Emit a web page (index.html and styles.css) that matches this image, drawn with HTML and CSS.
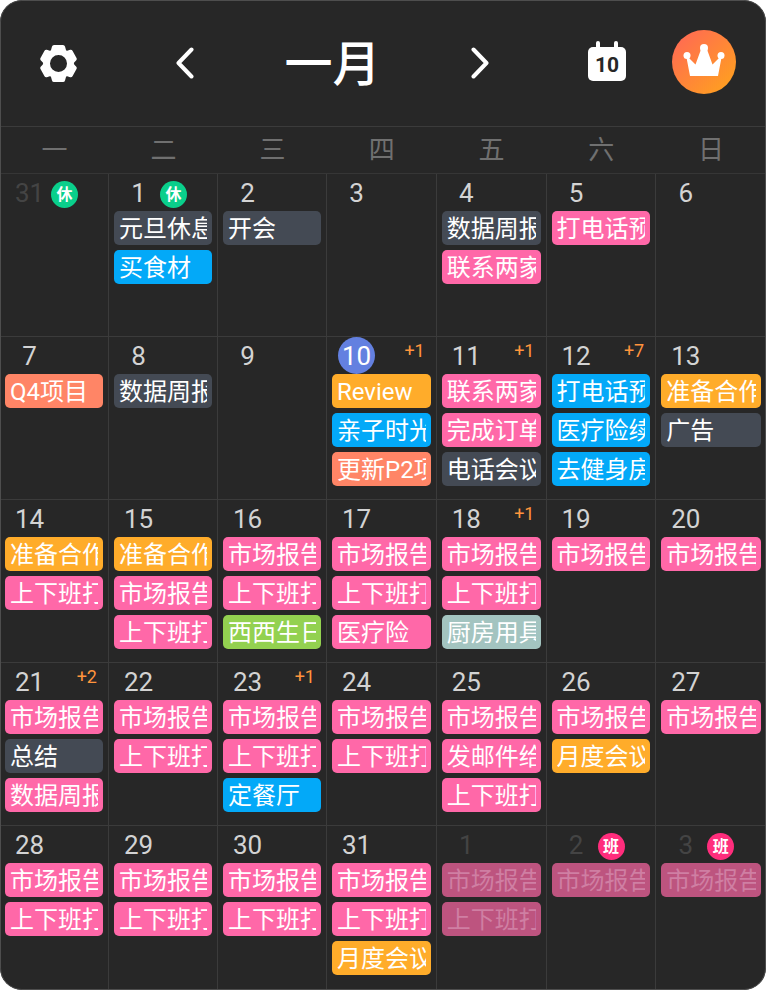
FILE: index.html
```html
<!DOCTYPE html>
<html lang="zh-CN">
<head>
<meta charset="utf-8">
<meta name="viewport" content="width=device-width, initial-scale=1">
<title>一月</title>
<link rel="stylesheet" href="styles.css">
</head>
<body>
<main class="card">
  <header class="bar">
    <button class="icon-btn" type="button" aria-label="设置">
      <svg width="37" height="37" viewBox="0 0 37 37"><path fill="#fff" fill-rule="evenodd" d="M14 0h9q1.600 0 2 1.500l1 3.500q.3 1 1.200.7l3-.9q1.500-.4 2.300 1l4 7.200q.7 1.300-.4 2.400l-1.700 1.900q-1 1.200 0 2.400l1.700 1.900q1.100 1.100.4 2.400l-4 7.200q-.8 1.400-2.300 1l-3-.9q-.9-.3-1.200.7l-1 3.500q-.4 1.500-2 1.500h-9q-1.600 0-2-1.500l-1-3.500q-.3-1-1.200-.7l-3 .9q-1.500.4-2.300-1l-4-7.200q-.7-1.300.4-2.400l1.700-1.900q1-1.200 0-2.400l-1.700-1.900q-1.100-1.100-.4-2.400l4-7.200q.8-1.400 2.300-1l3 .9q.9.3 1.200-.7l1-3.500q.4-1.500 2-1.500zM18.500 10a8.500 8.500 0 1 0 0 17a8.500 8.500 0 1 0 0-17z"/></svg>
    </button>
    <nav class="months" aria-label="月份">
      <button class="icon-btn" type="button" aria-label="上个月">
        <svg width="19" height="32" viewBox="0 0 19 32"><path d="M16.500 2.500L3.500 16l13 13.500" fill="none" stroke="#fff" stroke-width="4" stroke-linecap="round" stroke-linejoin="round"/></svg>
      </button>
      <h1 class="title">一月</h1>
      <button class="icon-btn" type="button" aria-label="下个月">
        <svg width="19" height="32" viewBox="0 0 19 32"><path d="M2.500 2.500l13 13.500l-13 13.500" fill="none" stroke="#fff" stroke-width="4" stroke-linecap="round" stroke-linejoin="round"/></svg>
      </button>
    </nav>
    <div class="tools">
      <button class="today-btn" type="button" aria-label="今天 10">10</button>
      <button class="vip-btn" type="button" aria-label="会员">
        <svg width="42" height="34" viewBox="0 0 42 34"><g fill="#fff"><path d="M3 12l4 21h28L39 12l-9.500 9.500L23.500 5h-5L12.500 21.500z"/><circle cx="21" cy="5" r="4"/><circle cx="4" cy="12.500" r="3.500"/><circle cx="38" cy="12.500" r="3.500"/></g></svg>
      </button>
    </div>
  </header>

  <table class="month">
    <colgroup>
      <col class="narrow" span="3">
      <col span="4">
    </colgroup>
    <thead>
      <tr><th>一</th><th>二</th><th>三</th><th>四</th><th>五</th><th>六</th><th>日</th></tr>
    </thead>
    <tbody>
      <tr>
        <td class="other"><div class="head"><span class="num">31</span><span class="tag rest">休</span></div></td>
        <td><div class="head"><span class="num">1</span><span class="tag rest">休</span></div><div class="ev slate">元旦休息</div><div class="ev blue">买食材</div></td>
        <td><div class="head"><span class="num">2</span></div><div class="ev slate">开会</div></td>
        <td><div class="head"><span class="num">3</span></div></td>
        <td><div class="head"><span class="num">4</span></div><div class="ev slate">数据周报</div><div class="ev pink">联系两家</div></td>
        <td><div class="head"><span class="num">5</span></div><div class="ev pink">打电话预</div></td>
        <td><div class="head"><span class="num">6</span></div></td>
      </tr>
      <tr>
        <td><div class="head"><span class="num">7</span></div><div class="ev coral">Q4项目</div></td>
        <td><div class="head"><span class="num">8</span></div><div class="ev slate">数据周报</div></td>
        <td><div class="head"><span class="num">9</span></div></td>
        <td><div class="head"><span class="num now">10</span><span class="more">+1</span></div><div class="ev amber">Review</div><div class="ev blue">亲子时光</div><div class="ev coral">更新P2项</div></td>
        <td><div class="head"><span class="num">11</span><span class="more">+1</span></div><div class="ev pink">联系两家</div><div class="ev pink">完成订单</div><div class="ev slate">电话会议</div></td>
        <td><div class="head"><span class="num">12</span><span class="more">+7</span></div><div class="ev blue">打电话预</div><div class="ev blue">医疗险续</div><div class="ev blue">去健身房</div></td>
        <td><div class="head"><span class="num">13</span></div><div class="ev amber">准备合作</div><div class="ev slate">广告</div></td>
      </tr>
      <tr>
        <td><div class="head"><span class="num">14</span></div><div class="ev amber">准备合作</div><div class="ev pink">上下班打</div></td>
        <td><div class="head"><span class="num">15</span></div><div class="ev amber">准备合作</div><div class="ev pink">市场报告</div><div class="ev pink">上下班打</div></td>
        <td><div class="head"><span class="num">16</span></div><div class="ev pink">市场报告</div><div class="ev pink">上下班打</div><div class="ev green">西西生日</div></td>
        <td><div class="head"><span class="num">17</span></div><div class="ev pink">市场报告</div><div class="ev pink">上下班打</div><div class="ev pink">医疗险</div></td>
        <td><div class="head"><span class="num">18</span><span class="more">+1</span></div><div class="ev pink">市场报告</div><div class="ev pink">上下班打</div><div class="ev sage">厨房用具</div></td>
        <td><div class="head"><span class="num">19</span></div><div class="ev pink">市场报告</div></td>
        <td><div class="head"><span class="num">20</span></div><div class="ev pink">市场报告</div></td>
      </tr>
      <tr>
        <td><div class="head"><span class="num">21</span><span class="more">+2</span></div><div class="ev pink">市场报告</div><div class="ev slate">总结</div><div class="ev pink">数据周报</div></td>
        <td><div class="head"><span class="num">22</span></div><div class="ev pink">市场报告</div><div class="ev pink">上下班打</div></td>
        <td><div class="head"><span class="num">23</span><span class="more">+1</span></div><div class="ev pink">市场报告</div><div class="ev pink">上下班打</div><div class="ev blue">定餐厅</div></td>
        <td><div class="head"><span class="num">24</span></div><div class="ev pink">市场报告</div><div class="ev pink">上下班打</div></td>
        <td><div class="head"><span class="num">25</span></div><div class="ev pink">市场报告</div><div class="ev pink">发邮件给</div><div class="ev pink">上下班打</div></td>
        <td><div class="head"><span class="num">26</span></div><div class="ev pink">市场报告</div><div class="ev amber">月度会议</div></td>
        <td><div class="head"><span class="num">27</span></div><div class="ev pink">市场报告</div></td>
      </tr>
      <tr>
        <td><div class="head"><span class="num">28</span></div><div class="ev pink">市场报告</div><div class="ev pink">上下班打</div></td>
        <td><div class="head"><span class="num">29</span></div><div class="ev pink">市场报告</div><div class="ev pink">上下班打</div></td>
        <td><div class="head"><span class="num">30</span></div><div class="ev pink">市场报告</div><div class="ev pink">上下班打</div></td>
        <td><div class="head"><span class="num">31</span></div><div class="ev pink">市场报告</div><div class="ev pink">上下班打</div><div class="ev amber">月度会议</div></td>
        <td class="other"><div class="head"><span class="num">1</span></div><div class="ev pink">市场报告</div><div class="ev pink">上下班打</div></td>
        <td class="other"><div class="head"><span class="num">2</span><span class="tag work">班</span></div><div class="ev pink">市场报告</div></td>
        <td class="other"><div class="head"><span class="num">3</span><span class="tag work">班</span></div><div class="ev pink">市场报告</div></td>
      </tr>
    </tbody>
  </table>
</main>
</body>
</html>
```
FILE: styles.css
```css
* {
  box-sizing: border-box;
}

body {
  margin: 0;
  background: #fff;
  font-family: Roboto, "Noto Sans CJK SC", sans-serif;
  color: #fff;
}

.card {
  position: relative;
  min-height: 100vh;
  background: #272727;
  border-radius: 22px;
  overflow: hidden;
}

.card::after {
  content: "";
  position: absolute;
  inset: 0;
  border: 1px solid #4e4e4e;
  border-radius: 22px;
  pointer-events: none;
}

button {
  padding: 0;
  border: 0;
  background: none;
  color: inherit;
  font-family: inherit;
  cursor: pointer;
}

svg {
  display: block;
}

/* Top bar */
.bar {
  display: flex;
  align-items: center;
  justify-content: space-between;
  height: 127px;
  padding: 0 30px 0 40px;
  border-bottom: 1px solid #3b3b3b;
}

.months {
  display: flex;
  align-items: center;
  justify-content: space-between;
  width: 316px;
}

.title {
  margin: 0;
  padding-top: 4px;
  font-size: 48px;
  font-weight: 500;
  line-height: 64px;
}

.tools {
  display: flex;
  align-items: center;
  gap: 46px;
}

.today-btn {
  position: relative;
  width: 38px;
  height: 34px;
  margin-top: 2px;
  border-radius: 5px;
  background: #fff;
  color: #272727;
  font-size: 21px;
  font-weight: 700;
  line-height: 36px;
}

.today-btn::before,
.today-btn::after {
  content: "";
  position: absolute;
  top: -6px;
  width: 4px;
  height: 10px;
  border-radius: 2px;
  background: #fff;
}

.today-btn::before {
  left: 8px;
}

.today-btn::after {
  right: 8px;
}

.vip-btn {
  display: grid;
  place-items: center;
  width: 64px;
  height: 64px;
  margin-bottom: 2px;
  padding-bottom: 4px;
  border-radius: 50%;
  background: linear-gradient(135deg, #ff6b52 10%, #ff9f20 90%);
}

/* Month grid */
.month {
  width: 100%;
  table-layout: fixed;
  border-collapse: separate;
  border-spacing: 0;
}

.narrow {
  width: 14.23%;
}

th {
  height: 47px;
  padding: 0;
  border-bottom: 1px solid #363636;
  color: #707070;
  font-size: 26px;
  font-weight: 400;
  line-height: 46px;
}

td {
  height: 163px;
  padding: 0 5px;
  border-right: 1px solid #3b3b3b;
  border-bottom: 1px solid #3b3b3b;
  vertical-align: top;
}

td:last-child {
  border-right: 0;
}

tbody tr:last-child td {
  border-bottom: 0;
}

.head {
  display: flex;
  align-items: flex-start;
  height: 37px;
  padding: 0 6px;
}

.num {
  width: 37px;
  height: 37px;
  border-radius: 50%;
  color: #d3d3d3;
  font-size: 26px;
  line-height: 38px;
  text-align: center;
}

.now {
  background: #6380e0;
  color: #fff;
}

.more {
  margin-left: auto;
  color: #ff943d;
  font-size: 18px;
  line-height: 28px;
}

.tag {
  width: 27px;
  height: 27px;
  margin: 7px 0 0 3px;
  border-radius: 50%;
  font-size: 16px;
  font-weight: 700;
  line-height: 28px;
  text-align: center;
}

.rest {
  background: #0acf8b;
}

.work {
  background: #ff2d7c;
}

.ev {
  height: 34px;
  margin-bottom: 5px;
  border: solid transparent;
  border-width: 0 5px;
  border-radius: 5px;
  font-size: 24px;
  line-height: 36px;
  white-space: nowrap;
  overflow: hidden;
}

.slate {
  background-color: #444a54;
}

.blue {
  background-color: #03a9f8;
}

.pink {
  background-color: #ff68a8;
}

.coral {
  background-color: #ff8566;
}

.amber {
  background-color: #ffac2a;
}

.green {
  background-color: #93d150;
}

.sage {
  background-color: #a3c4c0;
}

.other .num {
  color: #444;
}

.other .pink {
  background-color: #bd547f;
  color: #cf7fa3;
}
```
